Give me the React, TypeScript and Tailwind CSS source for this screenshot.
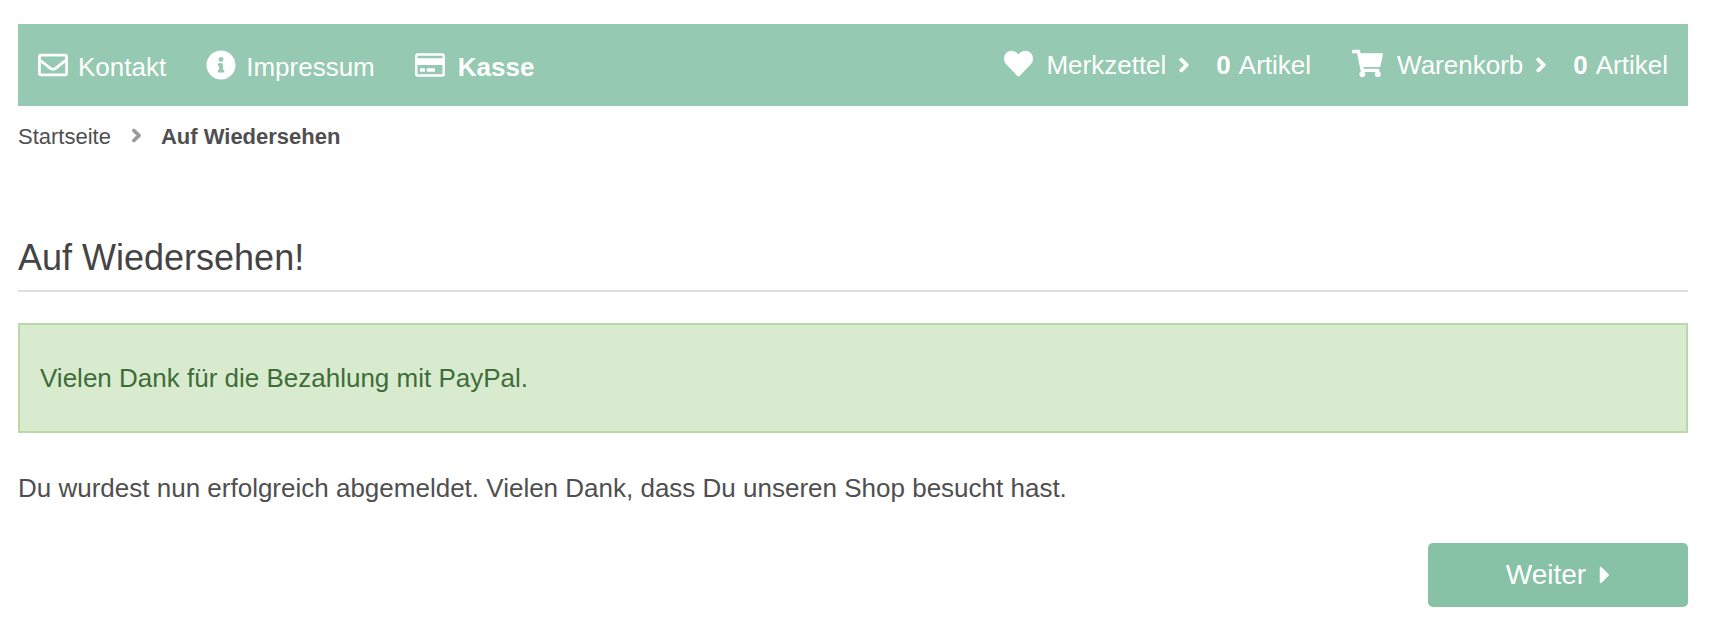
import { FaRegEnvelope, FaInfoCircle, FaRegCreditCard, FaHeart, FaShoppingCart, FaChevronRight, FaCaretRight } from 'react-icons/fa'

const leftLinks = [
  { label: 'Kontakt', icon: FaRegEnvelope, textClass: 'ml-[10px]' },
  { label: 'Impressum', icon: FaInfoCircle, textClass: 'ml-[10px]' },
  { label: 'Kasse', icon: FaRegCreditCard, textClass: 'ml-[13px] font-bold' },
]

const rightLinks = [
  { label: 'Merkzettel', icon: FaHeart, iconClass: 'mr-[13px] h-[29px] w-[29px]' },
  { label: 'Warenkorb', icon: FaShoppingCart, iconClass: 'mr-[14px] h-[31px] w-[31px]' },
]

export default function App() {
  return (
    <div className="min-h-[630px] bg-white pl-[18px] pr-[46px] pt-[24px] font-['Liberation_Sans',sans-serif] text-[#4f4f4f]">
      {/* Top bar */}
      <nav className="flex h-[82px] items-center justify-between bg-[#96c9b1] px-5 text-[26px] text-white">
        <div className="flex items-center gap-[40px]">
          {leftLinks.map((item) => {
            const Icon = item.icon
            return (
              <a key={item.label} className="flex items-center">
                <Icon className="h-[30px] w-[30px]" />
                <span className={`translate-y-[2px] ${item.textClass}`}>{item.label}</span>
              </a>
            )
          })}
        </div>
        <div className="flex items-center gap-[41px]">
          {rightLinks.map((item) => {
            const Icon = item.icon
            return (
              <a key={item.label} className="flex items-center">
                <Icon className={`-translate-y-[2px] ${item.iconClass}`} />
                <span>{item.label}</span>
                <FaChevronRight className="ml-[11px] mr-[25px] h-[16px] w-[14px] stroke-[40px]" />
                <span className="mr-[8px] font-bold">0</span>
                <span>Artikel</span>
              </a>
            )
          })}
        </div>
      </nav>

      {/* Breadcrumb */}
      <div className="mt-[14px] flex items-center text-[22px]">
        <span>Startseite</span>
        <FaChevronRight className="ml-[19px] mr-[18px] h-[15px] w-[13px] -translate-y-[1px] stroke-[40px] text-[#999999]" />
        <span className="font-bold">Auf Wiedersehen</span>
      </div>

      <h1 className="mt-[78px] border-b-2 border-[#dddddd] pb-[5px] text-[36px] text-[#444444]">Auf Wiedersehen!</h1>

      <div className="mt-[31px] border-2 border-[#b9d9a6] bg-[#d9ebcf] px-5 pb-[33px] pt-[34px] text-[26px] text-[#3e6d3a]">
        Vielen Dank für die Bezahlung mit PayPal.
      </div>

      <p className="mt-[36px] text-[26px]">Du wurdest nun erfolgreich abgemeldet. Vielen Dank, dass Du unseren Shop besucht hast.</p>

      <div className="mt-[35px] flex justify-end">
        <button className="flex h-[64px] w-[260px] items-center justify-center gap-[10px] rounded-[5px] bg-[#87c1a6] pl-[4px] text-[28px] text-white">
          Weiter
          <FaCaretRight className="h-[28px] w-[18px]" />
        </button>
      </div>
    </div>
  )
}
